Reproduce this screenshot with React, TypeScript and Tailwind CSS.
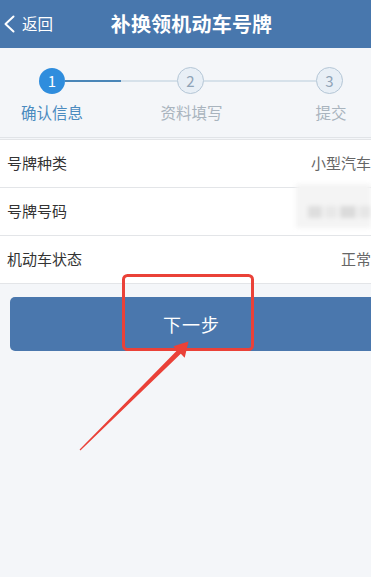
import React from 'react';

const font = { fontFamily: '"Noto Sans CJK SC", "Noto Sans", sans-serif' };

interface InfoRow {
  label: string;
  value?: string;
  blurred?: boolean;
}

const rows: InfoRow[] = [
  { label: '号牌种类', value: '小型汽车' },
  { label: '号牌号码', blurred: true },
  { label: '机动车状态', value: '正常' },
];

const StepCircle: React.FC<{ n: number; active?: boolean }> = ({ n, active }) =>
  active ? (
    <div className="w-[26px] h-[26px] rounded-full bg-[#2f8ddd] flex items-center justify-center text-white text-[15px] leading-none">
      {n}
    </div>
  ) : (
    <div className="w-[27px] h-[27px] rounded-full bg-[#e8eff6] border-[1.5px] border-[#b4c6d6] flex items-center justify-center text-[#8fa3b6] text-[15px] leading-none">
      {n}
    </div>
  );

export default function App() {
  return (
    <div className="relative w-[371px] h-[577px] overflow-hidden bg-[#f4f6f9]" style={font}>
      {/* header */}
      <div className="h-[48px] bg-[#4877ad] grid grid-cols-[1fr_auto_1fr] items-center text-white">
        <div className="flex items-center gap-[6px] pl-[3px]">
          <svg width="13" height="18" viewBox="0 0 13 18" fill="none">
            <path d="M10.5 1.5 L2.5 9 L10.5 16.5" stroke="white" strokeWidth="2" strokeLinecap="round" strokeLinejoin="round" />
          </svg>
          <span className="text-[15.5px]">返回</span>
        </div>
        <div className="text-[20px] font-bold pl-[12px] tracking-[0.2px]">补换领机动车号牌</div>
        <div />
      </div>

      {/* steps */}
      <div className="h-[90px] pt-[19px] border-b border-[#e1e4e8]">
        <div className="flex items-center pl-[39px] pr-[28px]">
          <StepCircle n={1} active />
          <div className="flex-1 flex">
            <div className="flex-1 h-[2px] bg-[#4a86b8]" />
            <div className="flex-1 h-[2px] bg-[#d6e1ea]" />
          </div>
          <StepCircle n={2} />
          <div className="flex-1 h-[2px] bg-[#d6e1ea]" />
          <StepCircle n={3} />
        </div>
        <div className="flex justify-between pl-[20px] pr-[8px] mt-[7px] text-[15.5px]">
          <div className="w-[64px] text-center text-[#4b8bbf]">确认信息</div>
          <div className="w-[64px] text-center text-[#a9b4be]">资料填写</div>
          <div className="w-[64px] text-center text-[#a9b4be]">提交</div>
        </div>
      </div>

      {/* info rows */}
      <div className="mt-[1px] bg-white border-t border-[#e3e5e8]">
        {rows.map((row) => (
          <div
            key={row.label}
            className="relative h-[48px] flex items-center justify-between pl-[7px] border-b border-[#e3e5e8] text-[15px]"
          >
            <span className="text-[#333333]">{row.label}</span>
            {row.blurred ? (
              <div className="absolute right-0 top-[-4px] w-[75px] h-[44px] bg-[#f4f4f4] blur-[2px] flex items-end gap-[3px] pl-[12px] pb-[10px]">
                <div className="w-[14px] h-[12px] bg-[#dedede]" />
                <div className="w-[12px] h-[12px] bg-[#e8e8e8]" />
                <div className="w-[16px] h-[12px] bg-[#dbdbdb]" />
                <div className="w-[12px] h-[12px] bg-[#e6e6e6]" />
              </div>
            ) : (
              <span className="text-[#666666] whitespace-nowrap">{row.value}</span>
            )}
          </div>
        ))}
      </div>

      {/* next button */}
      <div className="mt-[13px] ml-[10px] mr-[-10px] h-[54px] rounded-[5px] bg-[#4a77ad] flex items-center justify-center pr-[8px]">
        <span className="text-white text-[18px] tracking-[1px]">下一步</span>
      </div>

      {/* red annotation */}
      <svg className="absolute left-0 top-0 pointer-events-none" width="371" height="577" viewBox="0 0 371 577">
        <rect x="123.5" y="275.5" width="129" height="74" rx="4" fill="none" stroke="#ea4138" strokeWidth="3" />
        <polygon
          points="188.5,341.5 184.7,357.7 180.8,353.8 80.4,450.4 79.6,449.6 177.2,350.2 173.3,346.3"
          fill="#ea4138"
        />
      </svg>
    </div>
  );
}
